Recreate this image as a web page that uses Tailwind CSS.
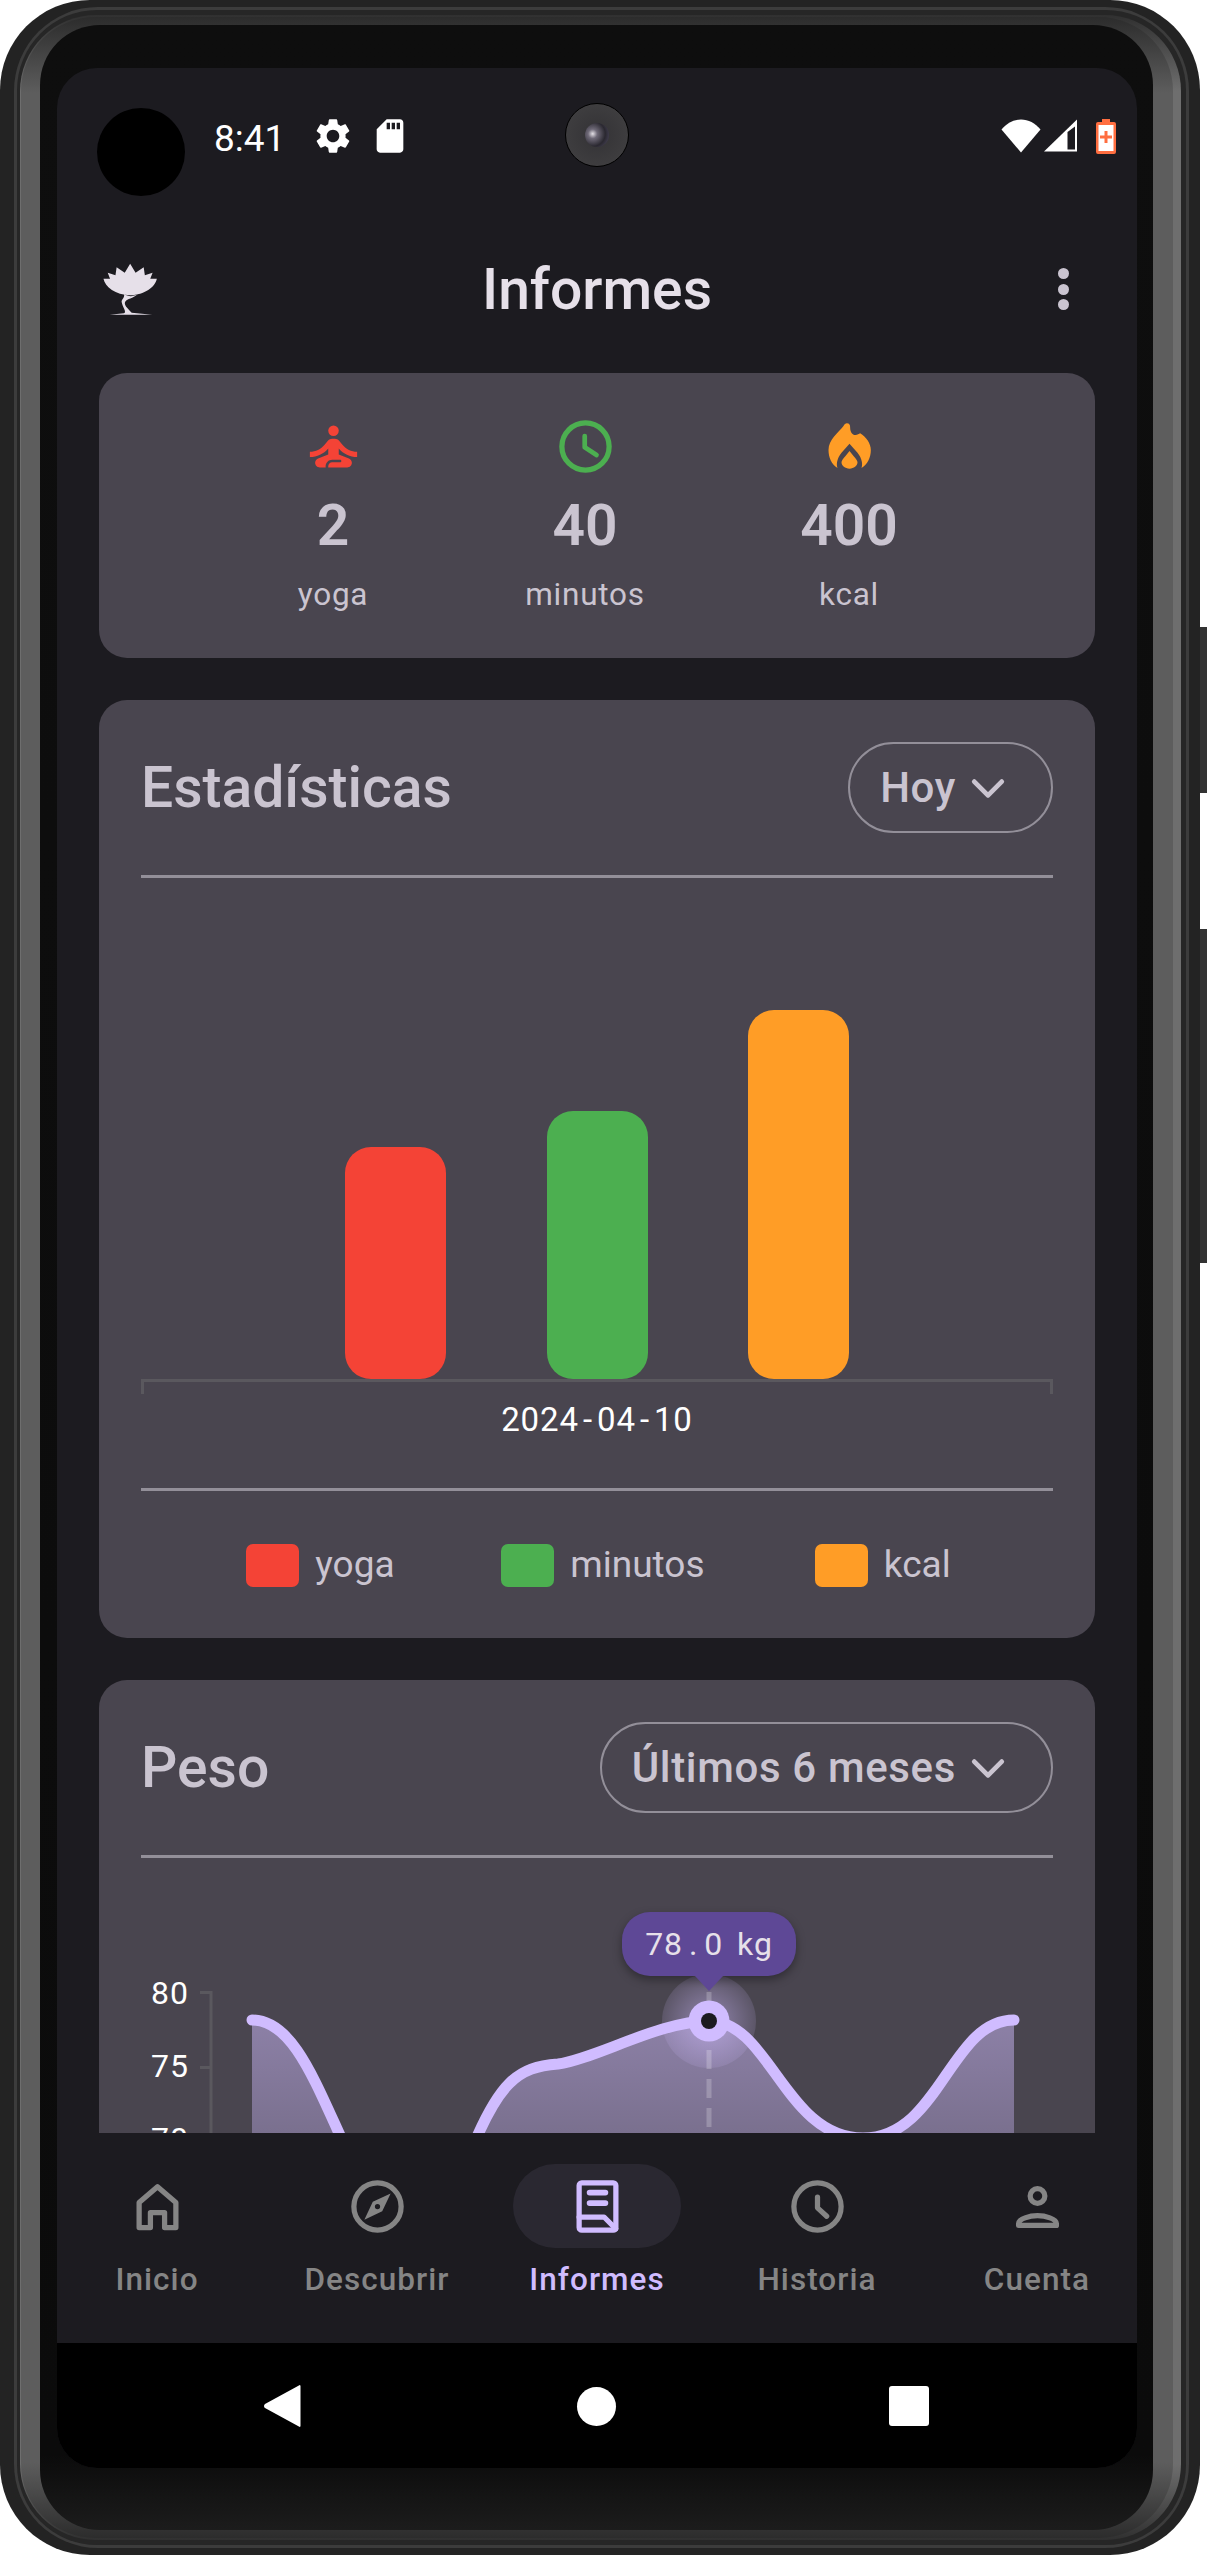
<!DOCTYPE html>
<html lang="es">
<head>
    <meta charset="UTF-8">
    <meta name="viewport" content="width=device-width, initial-scale=1.0">
    <title>Informes</title>
    <script src="https://cdn.jsdelivr.net/npm/@tailwindcss/browser@4"></script>
</head>
<body class="bg-white">
  <div class="relative w-[1207px] h-[2555px] overflow-hidden font-['Roboto',sans-serif]">
    <!-- side buttons -->
    <div class="absolute left-[1199px] top-[627px] w-[8px] h-[166px] bg-[#333333]"></div>
    <div class="absolute left-[1199px] top-[929px] w-[8px] h-[334px] bg-[#333333]"></div>

    <!-- phone frame -->
    <div class="relative w-[1200px] h-[2555px] rounded-[90px] bg-[#232323] pl-[14px] pr-[11px] py-[7px]">
      <div class="h-full rounded-[84px] bg-[#3c3c3c] p-[3px]">
        <div class="h-full rounded-[80px] bg-[#262626] pl-[3px] pr-[5px] py-[5px]">
          <div class="h-full rounded-[76px] bg-[linear-gradient(to_bottom,#303030_0,#6e6e6e_3%,#6e6e6e_97%,#303030_100%)] pl-[1px] pr-[8px] py-[2px]">
            <div class="h-full rounded-[74px] bg-[linear-gradient(to_bottom,#2c2c2c_0,#5d5d5d_3%,#5d5d5d_97%,#2c2c2c_100%)] pl-[19px] pr-[20px] py-[8px]">
              <div class="h-full rounded-[60px] bg-[linear-gradient(to_bottom,#0e0e0e_0,#0b0b0b_97%,#1c1c1c_100%)] pl-[17px] pr-[16px] pt-[43px]">

                <!-- screen -->
                <div class="relative w-[1080px] h-[2400px] rounded-[40px] overflow-hidden bg-[#1c1b20] flex flex-col">

                  <!-- status bar -->
                  <div class="h-[130px] shrink-0 flex items-start pl-[157px] pr-[21px] pt-[51px] text-white">
                    <span class="text-[37px] leading-[33px] w-[102px] pt-[3px]">8:41</span>
                    <svg class="w-[42px] h-[42px] -mt-[4px] -ml-[4px]" viewBox="0 0 24 24" fill="#fff"><path d="M19.140 12.940c.04-.3.06-.61.06-.94 0-.32-.02-.64-.07-.94l2.030-1.580c.18-.14.23-.41.12-.61l-1.920-3.320c-.12-.22-.37-.29-.59-.22l-2.390.96c-.5-.38-1.030-.7-1.620-.94l-.36-2.540c-.04-.24-.24-.41-.48-.41h-3.840c-.24 0-.43.17-.47.41l-.36 2.540c-.59.24-1.130.57-1.620.94l-2.390-.96c-.22-.08-.47 0-.59.22L2.740 8.870c-.12.21-.08.47.12.61l2.030 1.580c-.05.3-.09.63-.09.94s.02.64.07.94l-2.030 1.580c-.18.14-.23.41-.12.61l1.920 3.320c.12.22.37.29.59.22l2.390-.96c.5.38 1.030.7 1.620.94l.36 2.540c.05.24.24.41.48.41h3.840c.24 0 .44-.17.47-.41l.36-2.540c.59-.24 1.130-.56 1.620-.94l2.390.96c.22.08.47 0 .59-.22l1.920-3.320c.12-.22.07-.47-.12-.61l-2.010-1.580zM12 15.600c-1.980 0-3.600-1.620-3.600-3.600s1.620-3.600 3.600-3.600 3.600 1.620 3.600 3.600-1.620 3.600-3.600 3.600z"/></svg>
                    <svg class="w-[40px] h-[40px] -mt-[3px] ml-[16px]" viewBox="0 0 24 24" fill="#fff"><path d="M18 2h-8L4.020 8 4 20c0 1.100.9 2 2 2h12c1.100 0 2-.9 2-2V4c0-1.100-.9-2-2-2zm-6 6h-2V4h2v4zm3 0h-2V4h2v4zm3 0h-2V4h2v4z"/></svg>
                    <div class="flex-1"></div>
                    <svg class="w-[40px] h-[34px]" viewBox="0 0 40 34" fill="#fff"><path d="M20 33.500L0.500 10.500C6 4 12.500 0.500 20 0.500s14 3.500 19.500 10z"/></svg>
                    <svg class="w-[33px] h-[33px] ml-[3px]" viewBox="0 0 33 33"><path fill="#fff" d="M33 0.500V32.500H0z"/><path fill="#1c1b20" d="M23.500 13L31 7.500V30.500H23.500z"/></svg>
                    <svg class="w-[20px] h-[35px] ml-[19px]" viewBox="0 0 20 35"><path fill="#ff6e40" d="M6 0h8v3h4a2 2 0 0 1 2 2v28a2 2 0 0 1-2 2H2a2 2 0 0 1-2-2V5a2 2 0 0 1 2-2h4z"/><rect x="2.500" y="6" width="15" height="26" fill="#fff"/><path fill="#ff6e40" d="M8.500 12h3v4.500H16v3h-4.500V24h-3v-4.500H4v-3h4.500z"/></svg>
                  </div>

                  <!-- front camera and black dot sit over the status bar -->
                  <div class="absolute left-[40px] top-[40px] w-[88px] h-[88px] rounded-full bg-black"></div>
                  <div class="absolute left-[508px] top-[35px] w-[64px] h-[64px] rounded-full bg-[radial-gradient(circle,#333235_0%,#3e3d3f_70%,#343335_100%)] border border-black flex items-center justify-center">
                    <div class="w-[24px] h-[24px] rounded-full bg-[radial-gradient(circle_at_32%_45%,#e4e0e6_0%,#6f6a78_22%,#2a2830_60%,#55506a_100%)]"></div>
                  </div>

                  <!-- top app bar -->
                  <div class="h-[175px] shrink-0 relative flex items-start justify-center pt-[59px]">
                    <svg class="absolute left-[43px] top-[64px] w-[58px] h-[54px]" viewBox="260 780 150 162" preserveAspectRatio="none" fill="#e6e0e9">
                      <path d="M338 785L352 812L373 796L376 820L396 812L390 830L407 830C403 855 375 878 338 880C300 878 273 855 269 830L286 830L280 812L300 820L303 796L324 812Z"/>
                      <path d="M322 876C335 885 345 884 358 876C345 890 330 890 326 898C320 908 330 918 342 932L395 938L285 938L322 934C330 930 318 915 316 900C315 892 325 888 322 876Z"/>
                    </svg>
                    <h1 class="text-[57px] leading-[66px] font-medium text-[#e6e0e9]">Informes</h1>
                    <div class="absolute right-[68px] top-[70px] flex flex-col gap-[4.500px]">
                      <div class="w-[11px] h-[11px] rounded-full bg-[#cac4d0]"></div>
                      <div class="w-[11px] h-[11px] rounded-full bg-[#cac4d0]"></div>
                      <div class="w-[11px] h-[11px] rounded-full bg-[#cac4d0]"></div>
                    </div>
                  </div>

                  <!-- scrolling content -->
                  <div class="flex-1 min-h-0 overflow-hidden px-[42px]">
                    <!-- summary card -->
                    <div class="h-[285px] rounded-[28px] bg-[#49454f] relative">
                      <div class="absolute left-[134px] top-[42px] w-[200px] flex flex-col items-center">
                        <svg class="w-[63px] h-[63px]" viewBox="0 0 24 24" fill="#f44336"><circle cx="12" cy="6" r="2"/><path d="M21 16v-2c-2.240 0-4.160-.96-5.600-2.680l-1.340-1.600C13.680 9.260 13.120 9 12.530 9h-1.050c-.59 0-1.150.26-1.530.72l-1.340 1.600C7.160 13.040 5.240 14 3 14v2c2.770 0 5.190-1.170 7-3.250V15l-3.880 1.550c-.67.27-1.120.93-1.120 1.660C5 19.200 5.800 20 6.790 20H9v-.5c0-1.380 1.120-2.500 2.500-2.500h3c.28 0 .5.22.5.5s-.22.5-.5.5h-3c-.83 0-1.500.67-1.500 1.500v.5h7.210c.99 0 1.790-.8 1.790-1.790 0-.73-.45-1.390-1.120-1.660L14 15v-2.250c1.810 2.080 4.230 3.250 7 3.250z"/></svg>
                        <div class="mt-[15px] text-[57px] leading-[66px] font-semibold text-[#cac4d0]">2</div>
                        <div class="mt-[15px] text-[31.500px] leading-[42px] tracking-[.75px] text-[#cac4d0]">yoga</div>
                      </div>
                      <div class="absolute left-[386px] top-[42px] w-[200px] flex flex-col items-center">
                        <svg class="w-[63px] h-[63px]" viewBox="0 0 24 24" fill="none" stroke="#4caf50" stroke-width="2" stroke-linecap="round" stroke-linejoin="round"><circle cx="12" cy="12" r="9"/><path d="M11.700 8V12.300L16.200 15.200" stroke-width="1.800"/></svg>
                        <div class="mt-[15px] text-[57px] leading-[66px] font-semibold text-[#cac4d0]">40</div>
                        <div class="mt-[15px] text-[31.500px] leading-[42px] tracking-[.75px] text-[#cac4d0]">minutos</div>
                      </div>
                      <div class="absolute left-[650px] top-[42px] w-[200px] flex flex-col items-center">
                        <svg class="w-[63px] h-[63px]" viewBox="863.500 42 189 189" fill="#ff9d26"><path d="M950 67C958 67 960 72 960 80C960 92 966 102 976 102C982 102 986 98 990 97C1008 108 1022 128 1022 147C1022 170 1012 190 994 201C998 190 996 172 982 155L958 128L934 155C920 172 918 190 922 201C904 190 895 170 895 147C895 115 925 95 940 75C943 70 946 67 950 67Z"/><path d="M958 150L946 165C938 174 934 180 934 184C934 195 945 203 958 203C971 203 982 195 982 184C982 180 978 174 970 165Z"/></svg>
                        <div class="mt-[15px] text-[57px] leading-[66px] font-semibold text-[#cac4d0]">400</div>
                        <div class="mt-[15px] text-[31.500px] leading-[42px] tracking-[.75px] text-[#cac4d0]">kcal</div>
                      </div>
                    </div>

                    <!-- stats card -->
                    <div class="mt-[42px] h-[938px] rounded-[28px] bg-[#49454f] px-[42px] pt-[42px]">
                      <div class="flex items-center justify-between h-[91px]">
                        <h2 class="text-[57px] leading-[66px] font-medium text-[#cac4d0]">Estadísticas</h2>
                        <div class="h-[91px] rounded-full border-[2.500px] border-[#938f99] flex items-center pl-[30px] pr-[41px] gap-[10px] text-[42px] tracking-[.66px] font-medium text-[#cac4d0]">
                          Hoy
                          <svg class="w-[44px] h-[44px]" viewBox="0 0 24 24" fill="none" stroke="#cac4d0" stroke-width="2.600" stroke-linecap="round" stroke-linejoin="round"><path d="M4.500 8.500L12 16l7.500-7.500"/></svg>
                        </div>
                      </div>
                      <div class="mt-[42px] h-[3px] bg-[#938f99]"></div>
                      <!-- bar chart -->
                      <div class="h-[504px] flex items-end justify-center gap-[100.500px] border-b-[3px] border-[#5a585e] relative">
                        <div class="w-[101px] h-[232px] rounded-[26px] bg-[#f44336]"></div>
                        <div class="w-[101px] h-[268px] rounded-[26px] bg-[#4caf50]"></div>
                        <div class="w-[101px] h-[369px] rounded-[26px] bg-[#ff9d26]"></div>
                        <div class="absolute left-0 -bottom-[15px] w-[3px] h-[15px] bg-[#5a585e]"></div>
                        <div class="absolute right-0 -bottom-[15px] w-[3px] h-[15px] bg-[#5a585e]"></div>
                      </div>
                      <div class="mt-[17px] text-center text-[33px] leading-[42px] tracking-[.9px] text-white">2024<span class="mx-[4px]">-</span>04<span class="mx-[4px]">-</span>10</div>
                      <div class="mt-[47px] h-[3px] bg-[#938f99]"></div>
                      <div class="mt-[52px] pl-[3px] flex items-center justify-center text-[37px] leading-[44px] text-[#cac4d0]">
                        <div class="w-[53px] h-[43px] rounded-[7px] bg-[#f44336]"></div>
                        <span class="ml-[16px] w-[186px]">yoga</span>
                        <div class="w-[53px] h-[43px] rounded-[7px] bg-[#4caf50]"></div>
                        <span class="ml-[16px] w-[244.500px]">minutos</span>
                        <div class="w-[53px] h-[43px] rounded-[7px] bg-[#ff9d26]"></div>
                        <span class="ml-[16px]">kcal</span>
                      </div>
                    </div>

                    <!-- weight card -->
                    <div class="relative mt-[42px] h-[600px] rounded-[28px] bg-[#49454f] px-[42px] pt-[42px]">
                      <div class="flex items-center justify-between h-[91px]">
                        <h2 class="text-[57px] leading-[66px] font-medium text-[#cac4d0]">Peso</h2>
                        <div class="h-[91px] rounded-full border-[2.500px] border-[#938f99] flex items-center pl-[30px] pr-[41px] gap-[10px] text-[42px] tracking-[.66px] font-medium text-[#cac4d0]">
                          Últimos 6 meses
                          <svg class="w-[44px] h-[44px]" viewBox="0 0 24 24" fill="none" stroke="#cac4d0" stroke-width="2.600" stroke-linecap="round" stroke-linejoin="round"><path d="M4.500 8.500L12 16l7.500-7.500"/></svg>
                        </div>
                      </div>
                      <div class="mt-[42px] h-[3px] bg-[#938f99]"></div>

                      <!-- line chart, drawn in the coordinates of the card -->
                      <svg class="absolute left-0 top-0" width="996" height="600" viewBox="99 1679 996 600">
                        <defs>
                          <linearGradient id="area" x1="0" y1="2019" x2="0" y2="2200" gradientUnits="userSpaceOnUse">
                            <stop offset="0" stop-color="#d0bcff" stop-opacity=".5"/>
                            <stop offset="1" stop-color="#d0bcff" stop-opacity=".28"/>
                          </linearGradient>
                          <radialGradient id="halo">
                            <stop offset="0" stop-color="#d0bcff" stop-opacity=".55"/>
                            <stop offset="1" stop-color="#d0bcff" stop-opacity=".14"/>
                          </radialGradient>
                        </defs>
                        <path d="M211 1990V2200M200 1991.500H212M200 2066.500H212" stroke="#5a585e" stroke-width="3" fill="none"/>
                        <path fill="url(#area)" d="M252 2019C296 2019 318 2090 352 2160L410 2240L467 2160C498 2080 518 2066 558 2063C595 2058 660 2020 709 2020C770 2020 785 2137 863 2137C940 2137 950 2019 1014 2019V2300H252Z"/>
                        <circle cx="709" cy="2020" r="47" fill="url(#halo)"/>
                        <path d="M709 1990V2200" stroke="#fff" stroke-opacity=".22" stroke-width="5" stroke-dasharray="19 10" stroke-dashoffset="-1"/>
                        <path fill="none" stroke="#d0bcff" stroke-width="11" stroke-linecap="round" d="M252 2019C296 2019 318 2090 352 2160L410 2240L467 2160C498 2080 518 2066 558 2063C595 2058 660 2020 709 2020C770 2020 785 2137 863 2137C940 2137 950 2019 1014 2019"/>
                        <circle cx="709" cy="2020" r="20.500" fill="#d0bcff"/>
                        <circle cx="709" cy="2020" r="8" fill="#1c1b20"/>
                        <text x="189" y="2003" text-anchor="end" fill="#fff" font-family="Roboto" font-size="32" letter-spacing="1">80</text>
                        <text x="189" y="2076" text-anchor="end" fill="#fff" font-family="Roboto" font-size="32" letter-spacing="1">75</text>
                        <text x="189" y="2149" text-anchor="end" fill="#fff" font-family="Roboto" font-size="32" letter-spacing="1">70</text>
                      </svg>
                      <!-- tooltip -->
                      <div class="absolute left-[523px] top-[232px] w-[174px] h-[64px] rounded-[28px] bg-[#5e4896] shadow-[0_4px_10px_rgba(0,0,0,0.35)] flex items-center justify-center text-[32px] tracking-[.9px] text-[#e6e0e9] whitespace-pre">78<span class="mx-[6px]">.</span>0 <span class="ml-[5px]">kg</span></div>
                      <div class="absolute left-[596px] top-[296px] w-0 h-0 border-l-[14px] border-r-[14px] border-t-[15px] border-l-transparent border-r-transparent border-t-[#5e4896]"></div>
                    </div>
                  </div>

                  <!-- bottom navigation -->
                  <nav class="relative h-[210px] shrink-0 bg-[#1c1b20] flex justify-center">
                    <div class="w-[220px] shrink-0 flex flex-col items-center pt-[31px]">
                      <div class="w-[168px] h-[84px] flex items-center justify-center">
                        <svg class="w-[63px] h-[63px]" viewBox="0 0 24 24" fill="none" stroke="#858585" stroke-width="2" stroke-linejoin="round"><path d="M5 20V10.500L12 4.500L19 10.500V20H14.700V14.300H9.300V20Z"/></svg>
                      </div>
                      <span class="mt-[11px] text-[31.500px] leading-[42px] font-medium tracking-[1.050px] text-[#858585]">Inicio</span>
                    </div>
                    <div class="w-[220px] shrink-0 flex flex-col items-center pt-[31px]">
                      <div class="w-[168px] h-[84px] flex items-center justify-center">
                        <svg class="w-[63px] h-[63px]" viewBox="0 0 24 24" fill="none" stroke="#858585" stroke-width="2"><circle cx="12" cy="12" r="9"/><path fill="#858585" stroke="none" fill-rule="evenodd" d="M17 7L13.800 13.800L7 17L10.200 10.200ZM12 11a1 1 0 1 0 0 2 1 1 0 0 0 0-2z"/></svg>
                      </div>
                      <span class="mt-[11px] text-[31.500px] leading-[42px] font-medium tracking-[1.050px] text-[#858585]">Descubrir</span>
                    </div>
                    <div class="w-[220px] shrink-0 flex flex-col items-center pt-[31px]">
                      <div class="w-[168px] h-[84px] rounded-full bg-[#2a2831] flex items-center justify-center">
                        <svg class="w-[63px] h-[63px]" viewBox="0 0 24 24" fill="none" stroke="#d0bcff" stroke-width="2" stroke-linejoin="round" stroke-linecap="round"><rect x="5" y="3" width="14" height="18" rx="1"/><path d="M9 6.700h6M9 10.700h6" stroke-width="2.200"/><path d="M5 16H14.500L19 20.500"/></svg>
                      </div>
                      <span class="mt-[11px] text-[31.500px] leading-[42px] font-medium tracking-[1.050px] text-[#d0bcff]">Informes</span>
                    </div>
                    <div class="w-[220px] shrink-0 flex flex-col items-center pt-[31px]">
                      <div class="w-[168px] h-[84px] flex items-center justify-center">
                        <svg class="w-[63px] h-[63px]" viewBox="0 0 24 24" fill="none" stroke="#858585" stroke-width="2" stroke-linecap="round" stroke-linejoin="round"><circle cx="12" cy="12" r="9"/><path d="M12 8.400V12.500L15.500 15.700"/></svg>
                      </div>
                      <span class="mt-[11px] text-[31.500px] leading-[42px] font-medium tracking-[1.050px] text-[#858585]">Historia</span>
                    </div>
                    <div class="w-[220px] shrink-0 flex flex-col items-center pt-[31px]">
                      <div class="w-[168px] h-[84px] flex items-center justify-center">
                        <svg class="w-[63px] h-[63px]" viewBox="0 0 24 24" fill="none" stroke="#858585" stroke-width="2" stroke-linejoin="round"><circle cx="12" cy="8" r="2.800"/><path d="M4.800 19.200v-.7c0-1.800 4.200-3 7.200-3s7.200 1.200 7.200 3v.7z"/></svg>
                      </div>
                      <span class="mt-[11px] text-[31.500px] leading-[42px] font-medium tracking-[1.050px] text-[#858585]">Cuenta</span>
                    </div>
                  </nav>

                  <!-- android navigation -->
                  <div class="h-[125px] shrink-0 bg-black relative">
                    <svg class="absolute left-[207px] top-[42px] w-[37px] h-[42px]" viewBox="0 0 37 42" fill="#fff"><path d="M36.500 1V41a1 1 0 0 1-1.600.6L1 23a2.500 2.500 0 0 1 0-4L34.900 .4a1 1 0 0 1 1.600.6z"/></svg>
                    <div class="absolute left-[520px] top-[44px] w-[39px] h-[39px] rounded-full bg-white"></div>
                    <div class="absolute left-[832px] top-[43px] w-[40px] h-[40px] rounded-[3px] bg-white"></div>
                  </div>
                </div>

              </div>
            </div>
          </div>
        </div>
      </div>
    </div>
  </div>
</body>
</html>
